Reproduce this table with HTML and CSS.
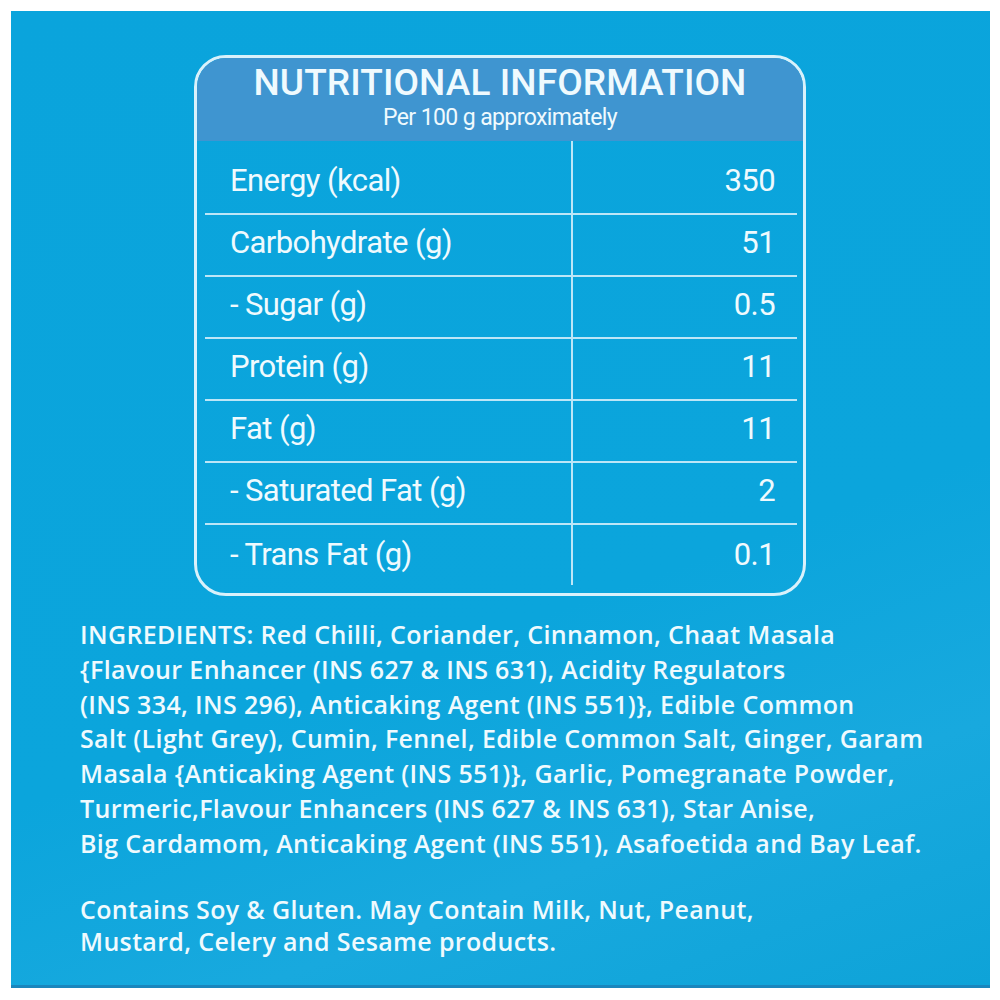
FILE: index.html
```html
<!DOCTYPE html>
<html lang="en">
<head>
<meta charset="utf-8">
<title>Nutritional Information</title>
<link rel="stylesheet" href="styles.css">
</head>
<body>
<div class="panel">
  <div class="box">
    <div class="box-head">
      <div class="title">NUTRITIONAL INFORMATION</div>
      <div class="subtitle">Per 100 g approximately</div>
    </div>
    <div class="box-body">
      <div class="row first"><span class="name">Energy (kcal)</span><span class="val">350</span></div>
      <div class="row"><span class="name">Carbohydrate (g)</span><span class="val">51</span></div>
      <div class="row"><span class="name">- Sugar (g)</span><span class="val">0.5</span></div>
      <div class="row"><span class="name">Protein (g)</span><span class="val">11</span></div>
      <div class="row"><span class="name">Fat (g)</span><span class="val">11</span></div>
      <div class="row"><span class="name">- Saturated Fat (g)</span><span class="val">2</span></div>
      <div class="row last"><span class="name">- Trans Fat (g)</span><span class="val">0.1</span></div>
    </div>
  </div>
  <div class="ingredients">
    <div class="line">INGREDIENTS: Red Chilli, Coriander, Cinnamon, Chaat Masala</div>
    <div class="line">{Flavour Enhancer (INS 627 &amp; INS 631), Acidity Regulators</div>
    <div class="line">(INS 334, INS 296), Anticaking Agent (INS 551)}, Edible Common</div>
    <div class="line">Salt (Light Grey), Cumin, Fennel, Edible Common Salt, Ginger, Garam</div>
    <div class="line">Masala {Anticaking Agent (INS 551)}, Garlic, Pomegranate Powder,</div>
    <div class="line">Turmeric,Flavour Enhancers (INS 627 &amp; INS 631), Star Anise,</div>
    <div class="line">Big Cardamom, Anticaking Agent (INS 551), Asafoetida and Bay Leaf.</div>
  </div>
  <div class="allergens">
    <div class="line">Contains Soy &amp; Gluten. May Contain Milk, Nut, Peanut,</div>
    <div class="line">Mustard, Celery and Sesame products.</div>
  </div>
</div>
</body>
</html>
```
FILE: styles.css
```css
html, body {
  margin: 0;
  padding: 0;
  background: #ffffff;
}

body {
  padding: 11px 10px 12px 11px;
}

.panel {
  box-sizing: border-box;
  width: 979px;
  height: 977px;
  background: linear-gradient(160deg, #0aa4dc 0%, #0ba5dc 60%, #18a9de 80%, #0ea3d8 100%);
  border-bottom: 3px solid #1a86bd;
  padding-top: 44px;
  color: #effafe;
}

.box {
  box-sizing: border-box;
  width: 612px;
  margin-left: 183px;
  border: 3px solid #d9f1fb;
  border-radius: 32px;
  overflow: hidden;
}

.box-head {
  height: 83px;
  background: #3f95d0;
  display: flex;
  flex-direction: column;
  align-items: center;
  font-family: Roboto, "Liberation Sans", sans-serif;
}

.title {
  font-size: 37px;
  font-weight: 500;
  line-height: 40px;
  margin-top: 5px;
  letter-spacing: 0.1px;
}

.subtitle {
  font-size: 23px;
  line-height: 26px;
  margin-top: 2px;
  letter-spacing: -0.6px;
}

.box-body {
  padding: 0 6px 8px 8px;
  font-family: Roboto, "Liberation Sans", sans-serif;
  font-size: 31px;
  letter-spacing: -0.6px;
}

.row {
  display: grid;
  grid-template-columns: 366px 1fr;
  height: 62px;
  border-bottom: 2px solid #bde6f7;
  box-sizing: border-box;
}

.row.first {
  height: 74px;
}

.row.last {
  border-bottom: none;
  height: 60px;
}

.name {
  display: flex;
  align-items: flex-end;
  padding: 0 0 14px 25px;
}

.val {
  display: flex;
  align-items: flex-end;
  justify-content: flex-end;
  padding: 0 22px 14px 0;
  border-left: 2px solid #bde6f7;
}

.row.last .name,
.row.last .val {
  padding-bottom: 12px;
}

.ingredients,
.allergens {
  font-family: "Open Sans", "DejaVu Sans", sans-serif;
  font-size: 25px;
  font-weight: 600;
  letter-spacing: 0.35px;
  line-height: 34.8px;
  padding-left: 69px;
  white-space: nowrap;
}

.ingredients {
  margin-top: 21px;
}

.allergens {
  margin-top: 32px;
  line-height: 32px;
}
```
